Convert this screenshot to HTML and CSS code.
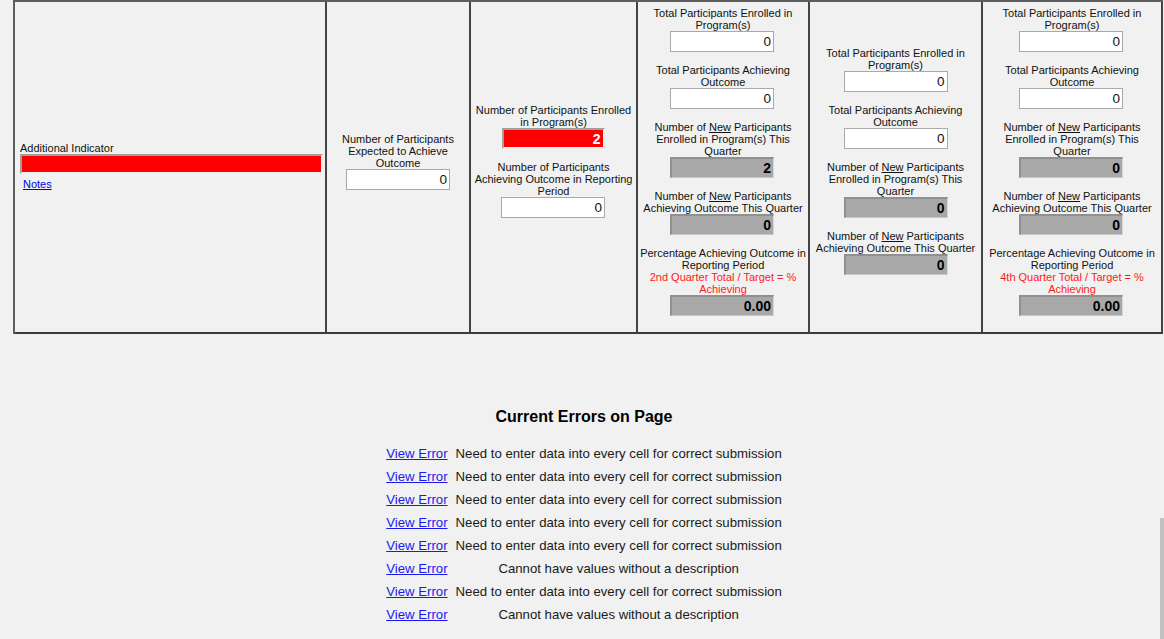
FILE: index.html
```html
<!DOCTYPE html>
<html>
<head>
<meta charset="utf-8">
<title>Outcome Indicators</title>
<link rel="stylesheet" href="styles.css">
</head>
<body>
<div class="grid">
  <div class="cell c1">
    <div class="ind">
      <div class="ind-label">Additional Indicator</div>
      <input class="inp red wide" type="text" value="" readonly>
      <a class="notes" href="#">Notes</a>
    </div>
  </div>

  <div class="cell c2">
    <div class="field">
      <div class="lbl">Number of Participants Expected to Achieve Outcome</div>
      <input class="inp" type="text" value="0" readonly>
    </div>
  </div>

  <div class="cell c3">
    <div class="field">
      <div class="lbl">Number of Participants Enrolled in Program(s)</div>
      <input class="inp red" type="text" value="2" readonly>
    </div>
    <div class="field">
      <div class="lbl">Number of Participants Achieving Outcome in Reporting Period</div>
      <input class="inp" type="text" value="0" readonly>
    </div>
  </div>

  <div class="cell c4">
    <div class="field">
      <div class="lbl">Total Participants Enrolled in Program(s)</div>
      <input class="inp" type="text" value="0" readonly>
    </div>
    <div class="field">
      <div class="lbl">Total Participants Achieving Outcome</div>
      <input class="inp" type="text" value="0" readonly>
    </div>
    <div class="field">
      <div class="lbl">Number of <u>New</u> Participants Enrolled in Program(s) This Quarter</div>
      <input class="inp calc" type="text" value="2" readonly>
    </div>
    <div class="field">
      <div class="lbl">Number of <u>New</u> Participants Achieving Outcome This Quarter</div>
      <input class="inp calc" type="text" value="0" readonly>
    </div>
    <div class="field">
      <div class="lbl">Percentage Achieving Outcome in Reporting Period<br><span class="hint">2nd Quarter Total / Target = % Achieving</span></div>
      <input class="inp calc" type="text" value="0.00" readonly>
    </div>
  </div>

  <div class="cell c5">
    <div class="field">
      <div class="lbl">Total Participants Enrolled in Program(s)</div>
      <input class="inp" type="text" value="0" readonly>
    </div>
    <div class="field">
      <div class="lbl">Total Participants Achieving Outcome</div>
      <input class="inp" type="text" value="0" readonly>
    </div>
    <div class="field">
      <div class="lbl">Number of <u>New</u> Participants Enrolled in Program(s) This Quarter</div>
      <input class="inp calc" type="text" value="0" readonly>
    </div>
    <div class="field">
      <div class="lbl">Number of <u>New</u> Participants Achieving Outcome This Quarter</div>
      <input class="inp calc" type="text" value="0" readonly>
    </div>
  </div>

  <div class="cell c6">
    <div class="field">
      <div class="lbl">Total Participants Enrolled in Program(s)</div>
      <input class="inp" type="text" value="0" readonly>
    </div>
    <div class="field">
      <div class="lbl">Total Participants Achieving Outcome</div>
      <input class="inp" type="text" value="0" readonly>
    </div>
    <div class="field">
      <div class="lbl">Number of <u>New</u> Participants Enrolled in Program(s) This Quarter</div>
      <input class="inp calc" type="text" value="0" readonly>
    </div>
    <div class="field">
      <div class="lbl">Number of <u>New</u> Participants Achieving Outcome This Quarter</div>
      <input class="inp calc" type="text" value="0" readonly>
    </div>
    <div class="field">
      <div class="lbl">Percentage Achieving Outcome in Reporting Period<br><span class="hint">4th Quarter Total / Target = % Achieving</span></div>
      <input class="inp calc" type="text" value="0.00" readonly>
    </div>
  </div>
</div>

<div class="errors">
  <h2 class="errors-title">Current Errors on Page</h2>
  <table class="error-list">
    <tr><td class="err-link"><a href="#">View Error</a></td><td class="err-msg">Need to enter data into every cell for correct submission</td></tr>
    <tr><td class="err-link"><a href="#">View Error</a></td><td class="err-msg">Need to enter data into every cell for correct submission</td></tr>
    <tr><td class="err-link"><a href="#">View Error</a></td><td class="err-msg">Need to enter data into every cell for correct submission</td></tr>
    <tr><td class="err-link"><a href="#">View Error</a></td><td class="err-msg">Need to enter data into every cell for correct submission</td></tr>
    <tr><td class="err-link"><a href="#">View Error</a></td><td class="err-msg">Need to enter data into every cell for correct submission</td></tr>
    <tr><td class="err-link"><a href="#">View Error</a></td><td class="err-msg">Cannot have values without a description</td></tr>
    <tr><td class="err-link"><a href="#">View Error</a></td><td class="err-msg">Need to enter data into every cell for correct submission</td></tr>
    <tr><td class="err-link"><a href="#">View Error</a></td><td class="err-msg">Cannot have values without a description</td></tr>
  </table>
</div>

<div class="scroll-thumb"></div>
</body>
</html>
```

FILE: styles.css
```css
html, body {
  margin: 0;
  padding: 0;
  background: #f0f1f0;
  font-family: "Liberation Sans", Arial, sans-serif;
  color: #111;
  overflow: hidden;
}

.grid {
  display: grid;
  grid-template-columns: 312px 144px 167px 172px 173px 180px;
  width: 1150px;
  margin-left: 13px;
  box-sizing: border-box;
  border-left: 2px solid #5e5e5e;
  border-top: 2px solid #5e5e5e;
}

.cell {
  box-sizing: border-box;
  height: 332px;
  border-right: 2px solid #444;
  border-bottom: 2px solid #3a3a3a;
  display: flex;
  flex-direction: column;
  justify-content: center;
  align-items: center;
  padding: 0 2px;
}

.c1 {
  align-items: stretch;
  padding: 0 2px 0 5px;
}

.ind {
  display: flex;
  flex-direction: column;
  align-items: flex-start;
  padding-bottom: 2px;
}

.ind-label {
  font-size: 11px;
  line-height: 12px;
}

.notes {
  font-size: 11px;
  line-height: 12px;
  margin: 4px 0 0 3px;
  color: #0000ee;
}

.field {
  display: flex;
  flex-direction: column;
  align-items: center;
  margin-bottom: 12px;
}

.lbl {
  font-size: 11px;
  line-height: 12px;
  text-align: center;
}

.c2 .lbl { width: 132px; }
.c3 .lbl { width: 160px; }
.c4 .lbl, .c5 .lbl, .c6 .lbl { width: 168px; }

.hint {
  color: #ff1a1a;
}

.inp {
  box-sizing: border-box;
  width: 104px;
  height: 21px;
  margin: 0;
  padding: 0 2px;
  border: 1px solid #a9a9a9;
  background: #fff;
  font-family: "Liberation Sans", Arial, sans-serif;
  font-size: 13.5px;
  color: #111;
  text-align: right;
  outline: none;
}

.c4 .inp, .c6 .inp { margin-left: -2px; }

.inp.red {
  background: #ff0000;
  color: #fff;
  font-weight: bold;
  font-size: 14px;
  border-width: 2px;
  border-style: solid;
  border-color: #a0a0a0 #f0f0f0 #f0f0f0 #a0a0a0;
  width: 103px;
}

.c3 .inp { margin-left: -1px; }

.inp.wide {
  width: 303px;
  height: 20px;
}

.inp.calc {
  background: #a8a8a8;
  color: #000;
  font-weight: bold;
  font-size: 14px;
  border-width: 2px 1px 1px 2px;
  border-style: solid;
  border-color: #909090 #d8d8d8 #c8c8c8 #909090;
}

.errors {
  width: 1142px;
  margin-left: 13px;
  margin-top: 73px;
  display: flex;
  flex-direction: column;
  align-items: center;
}

.errors-title {
  margin: 0 0 16px 0;
  font-size: 16px;
  line-height: 19px;
  font-weight: bold;
  color: #000;
}

.error-list {
  border-collapse: collapse;
  border-spacing: 0;
}

.error-list td {
  padding: 4px 4px;
  font-size: 13.2px;
  line-height: 15px;
  white-space: nowrap;
}

.err-link a {
  color: #1a1aee;
}

.err-msg {
  text-align: center;
  color: #1a1a1a;
}

.scroll-thumb {
  position: fixed;
  right: 0;
  top: 518px;
  width: 4px;
  height: 121px;
  background: #c1c1c1;
}
```
